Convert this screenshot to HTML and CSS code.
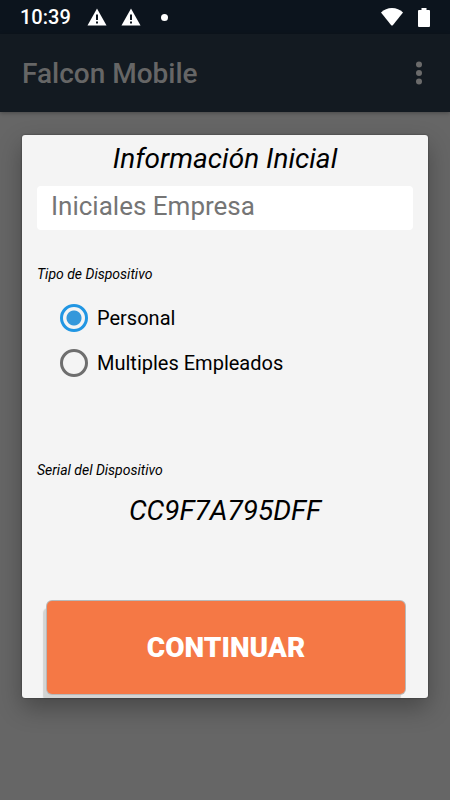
FILE: index.html
```html
<!DOCTYPE html>
<html lang="es">
<head>
<meta charset="utf-8">
<meta name="viewport" content="width=device-width, initial-scale=1">
<title>Falcon Mobile</title>
<link rel="stylesheet" href="styles.css">
</head>
<body>
<div class="status">
  <span class="clock">10:39</span>
  <svg class="warn" width="20" height="18" viewBox="0 0 20 18" aria-hidden="true"><path fill="#fff" d="M10 0.500 19.500 17.500H0.500Z"/><path fill="#0c141d" d="M9 6.500h2v5.500H9zM9 13.500h2v2H9z"/></svg>
  <svg class="warn" width="20" height="18" viewBox="0 0 20 18" aria-hidden="true"><path fill="#fff" d="M10 0.500 19.500 17.500H0.500Z"/><path fill="#0c141d" d="M9 6.500h2v5.500H9zM9 13.500h2v2H9z"/></svg>
  <span class="dot"></span>
  <svg class="wifi" width="22" height="18" viewBox="0 0 22 18" aria-hidden="true"><path fill="#fff" d="M0 4.500Q4.500 0 11 0t11 4.500L12 17q-1 1-2 0Z"/></svg>
  <svg class="battery" width="12" height="19" viewBox="0 0 12 19" aria-hidden="true"><path fill="#fff" d="M3.500 0h5v2H11q1 0 1 1v15q0 1-1 1H1q-1 0-1-1V3q0-1 1-1h2.500z"/></svg>
</div>
<header class="appbar">
  <h1 class="app-title">Falcon Mobile</h1>
  <button class="more" type="button" aria-label="Más opciones">
    <svg width="6" height="24" viewBox="0 0 6 24" aria-hidden="true"><g fill="#6b6b6b"><circle cx="3" cy="3.500" r="3"/><circle cx="3" cy="12" r="3"/><circle cx="3" cy="20.500" r="3"/></g></svg>
  </button>
</header>
<main class="screen">
  <form class="card">
    <h2 class="heading">Información Inicial</h2>
    <input class="company" type="text" placeholder="Iniciales Empresa" aria-label="Iniciales Empresa">
    <fieldset class="types">
      <legend class="caption">Tipo de Dispositivo</legend>
      <label class="option"><input class="radio" type="radio" name="tipo" checked>Personal</label>
      <label class="option"><input class="radio" type="radio" name="tipo">Multiples Empleados</label>
    </fieldset>
    <p class="caption">Serial del Dispositivo</p>
    <p class="serial">CC9F7A795DFF</p>
    <button class="submit" type="button">CONTINUAR</button>
  </form>
</main>
</body>
</html>
```
FILE: styles.css
```css
* {
  box-sizing: border-box;
}

body {
  margin: 0;
  min-height: 100vh;
  display: flex;
  flex-direction: column;
  background: #666;
  color: #000;
  font-family: Roboto, "Liberation Sans", sans-serif;
}

h1, h2, p {
  margin: 0;
  font-weight: 400;
}

.status {
  display: flex;
  align-items: center;
  height: 34px;
  padding: 0 20px;
  background: #0c141d;
}

.clock {
  margin-right: 2px;
  color: #fff;
  font-size: 20px;
  font-weight: 500;
}

.warn {
  margin-left: 14px;
}

.dot {
  width: 7px;
  height: 7px;
  margin-left: 20px;
  border-radius: 50%;
  background: #fff;
}

.wifi {
  margin-left: auto;
}

.battery {
  margin-left: 15px;
}

.appbar {
  display: flex;
  align-items: center;
  justify-content: space-between;
  height: 78px;
  padding: 0 22px;
  background: #131a21;
  box-shadow: 0 1px 4px rgba(0, 0, 0, 0.3);
}

.app-title {
  color: #666;
  font-size: 28px;
  font-weight: 500;
}

.more {
  display: flex;
  justify-content: center;
  width: 18px;
  padding: 0;
  border: 0;
  background: none;
}

.screen {
  padding: 23px 22px;
}

.card {
  display: flex;
  flex-direction: column;
  overflow: hidden;
  padding: 8px 15px 4px;
  border-radius: 3px;
  background: #f4f4f4;
  box-shadow: 0 10px 24px rgba(0, 0, 0, 0.3), 0 0 2px rgba(0, 0, 0, 0.5);
}

.heading,
.serial {
  font-size: 28px;
  line-height: 32px;
  font-style: italic;
  text-align: center;
}

.company {
  width: 100%;
  height: 44px;
  margin: 11px 0 34px;
  padding: 0 14px 4px;
  border: 0;
  border-radius: 4px;
  background: #fff;
  color: #000;
  font: 26px Roboto, "Liberation Sans", sans-serif;
}

.company::placeholder {
  color: #757575;
  opacity: 1;
}

.types {
  display: flex;
  flex-direction: column;
  min-width: 0;
  margin: 0 0 75px;
  padding: 0;
  border: 0;
}

.caption {
  padding: 0;
  font-size: 14px;
  line-height: 20px;
  font-style: italic;
}

.types .caption {
  margin-bottom: 11px;
}

.option {
  display: flex;
  align-items: center;
  gap: 9px;
  height: 45px;
  padding-left: 23px;
  font-size: 20px;
}

.radio {
  appearance: none;
  width: 28px;
  height: 28px;
  margin: 0;
  border: 3px solid #6e6e6e;
  border-radius: 50%;
}

.radio:checked {
  border-color: #2196e3;
  background: radial-gradient(circle, #3498db 7px, transparent 8px);
}

.serial {
  margin: 15px 0 74px;
}

.submit {
  height: 93px;
  margin: 0 8px 0 10px;
  border: 0;
  border-radius: 5px;
  background: #f57845;
  box-shadow: 0 0 0 1px #b8b8b8, -4px 7px 1px #d3d4d3;
  color: #fff;
  font: 900 28px Roboto, "Liberation Sans", sans-serif;
}
```
